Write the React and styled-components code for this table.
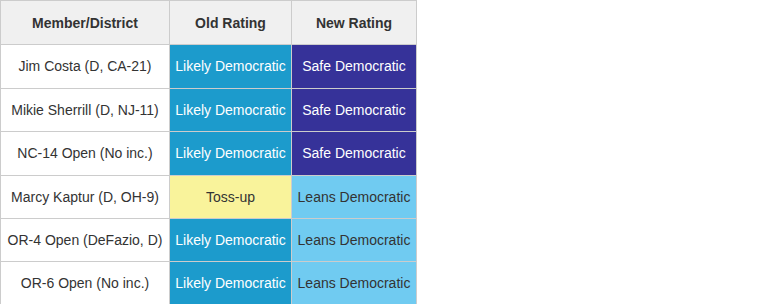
import React from 'react';
import styled, { createGlobalStyle } from 'styled-components';

const GlobalStyle = createGlobalStyle`
  body {
    margin: 0;
    background: #fff;
    font-family: "Liberation Sans", Arial, sans-serif;
  }
`

const ratingColors = {
  'Likely Democratic': { bg: '#1c9bcc', fg: '#fff' },
  'Safe Democratic': { bg: '#363299', fg: '#fff' },
  'Toss-up': { bg: '#f9f39b', fg: '#333' },
  'Leans Democratic': { bg: '#70cbf1', fg: '#333' },
};

const Table = styled.table`
  border-collapse: collapse;
  font-size: 14px;
  line-height: 1.6;
  color: #333;
`

const HeadCell = styled.th`
  background: #f0f0f0;
  border: 1px solid #ccc;
  padding: 10.5px 5px;
  width: ${p => p.$w}px;
  font-weight: bold;
  text-align: center;
`

const Cell = styled.td`
  border: 1px solid #ccc;
  padding: 10px 5px;
  text-align: center;
  white-space: nowrap;
`

const RatingCell = styled(Cell)`
  background: ${p => ratingColors[p.$rating].bg};
  color: ${p => ratingColors[p.$rating].fg};
`

const rows = [
  ['Jim Costa (D, CA-21)', 'Likely Democratic', 'Safe Democratic'],
  ['Mikie Sherrill (D, NJ-11)', 'Likely Democratic', 'Safe Democratic'],
  ['NC-14 Open (No inc.)', 'Likely Democratic', 'Safe Democratic'],
  ['Marcy Kaptur (D, OH-9)', 'Toss-up', 'Leans Democratic'],
  ['OR-4 Open (DeFazio, D)', 'Likely Democratic', 'Leans Democratic'],
  ['OR-6 Open (No inc.)', 'Likely Democratic', 'Leans Democratic'],
];

const App = () => (
  <>
    <GlobalStyle />
    <Table>
      <thead>
        <tr>
          <HeadCell $w={158}>Member/District</HeadCell>
          <HeadCell $w={111}>Old Rating</HeadCell>
          <HeadCell $w={114}>New Rating</HeadCell>
        </tr>
      </thead>
      <tbody>
        {rows.map(([member, oldR, newR]) => (
          <tr key={member}>
            <Cell>{member}</Cell>
            <RatingCell $rating={oldR}>{oldR}</RatingCell>
            <RatingCell $rating={newR}>{newR}</RatingCell>
          </tr>
        ))}
      </tbody>
    </Table>
  </>
);

export default App;
